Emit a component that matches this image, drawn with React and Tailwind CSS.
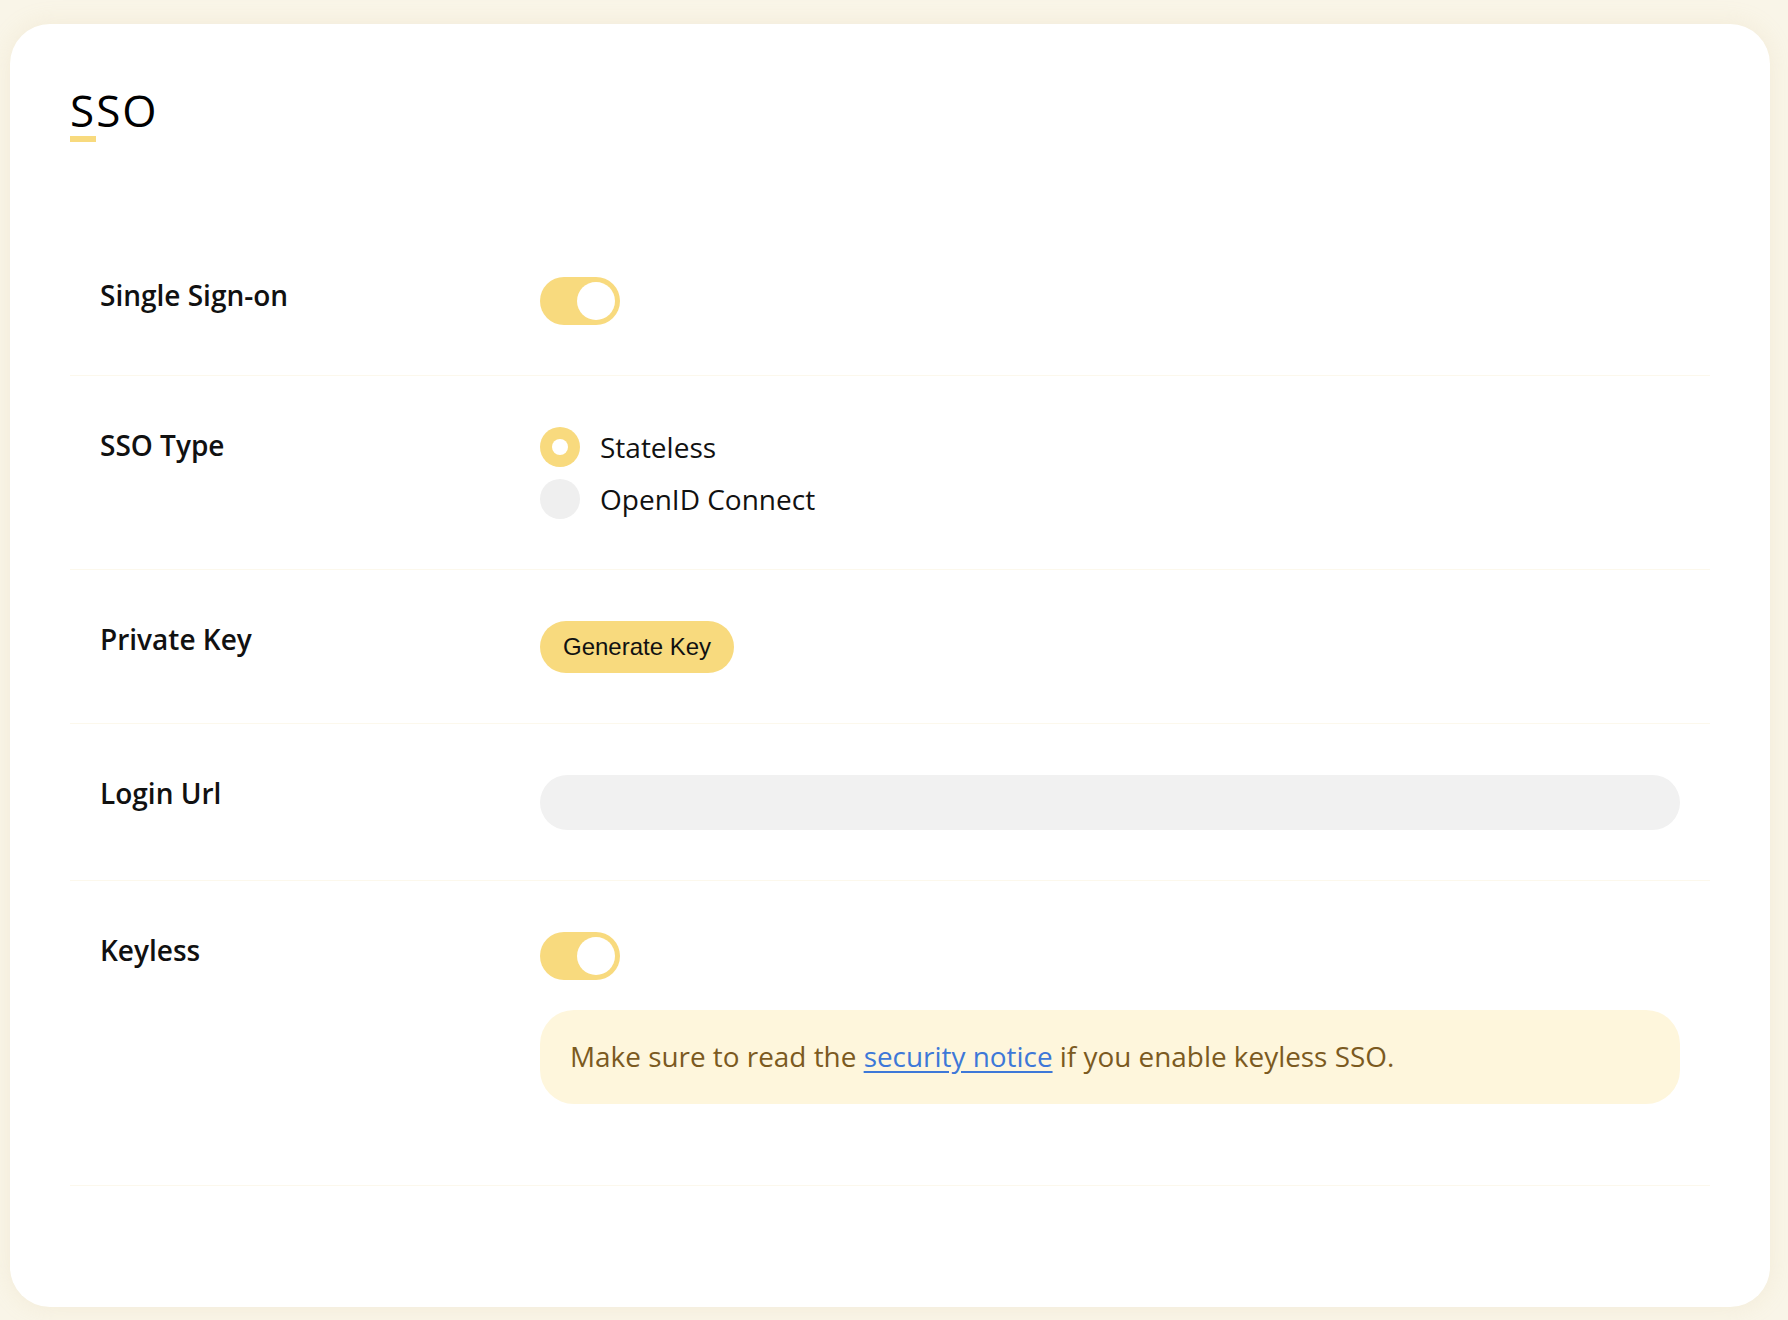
import { useState } from "react";

const Toggle = ({ on, onChange }) => (
  <button
    type="button"
    onClick={() => onChange(!on)}
    className={`flex h-[48px] w-[80px] shrink-0 items-center rounded-full p-[5px] ${
      on ? "justify-end bg-[#f8da7e]" : "justify-start bg-[#efefef]"
    }`}
  >
    <span className="block h-[38px] w-[38px] rounded-full bg-white" />
  </button>
);

const Radio = ({ checked, label, onClick }) => (
  <label onClick={onClick} className="flex cursor-pointer items-center gap-[20px]">
    <span
      className={`flex h-[40px] w-[40px] items-center justify-center rounded-full ${
        checked ? "bg-[#f8da7e]" : "bg-[#efefef]"
      }`}
    >
      {checked && <span className="block h-[16px] w-[16px] rounded-full bg-white" />}
    </span>
    <span className="text-[28px] leading-[40px] text-[#111]">{label}</span>
  </label>
);

const Row = ({ label, children, last = false }) => (
  <div
    className={`flex items-start border-b border-[#fcf8ec] px-[30px] pt-[51px] ${
      last ? "pb-[81px]" : "pb-[50px]"
    }`}
  >
    <div className="w-[440px] shrink-0 text-[28px] font-[650] leading-[36px] text-[#111]">
      {label}
    </div>
    <div className="flex min-w-0 flex-1 flex-col">{children}</div>
  </div>
);

export default function App() {
  const [sso, setSso] = useState(true);
  const [type, setType] = useState("stateless");
  const [keyless, setKeyless] = useState(true);

  return (
    <div
      className="min-h-screen bg-[#f9f5e8] pl-[10px] pt-[24px]"
      style={{ fontFamily: '"Open Sans", "Noto Sans", sans-serif' }}
    >
      <div className="h-[1283px] w-[1760px] rounded-[40px] bg-white px-[60px] pt-[64px] shadow-[0_0_24px_rgba(214,196,140,0.18)]">
        {/* Heading */}
        <h1 className="text-[44px] font-medium leading-[44px] tracking-[2px] text-black">SSO</h1>
        <div className="mt-[4px] h-[6px] w-[26px] bg-[#f8da7e]" />

        {/* Settings */}
        <div className="mt-[84px]">
          <Row label="Single Sign-on">
            <Toggle on={sso} onChange={setSso} />
          </Row>

          <Row label="SSO Type">
            <div className="flex flex-col gap-[12px]">
              <Radio
                checked={type === "stateless"}
                label="Stateless"
                onClick={() => setType("stateless")}
              />
              <Radio
                checked={type === "oidc"}
                label="OpenID Connect"
                onClick={() => setType("oidc")}
              />
            </div>
          </Row>

          <Row label="Private Key">
            <div>
              <button
                type="button"
                className="h-[52px] rounded-full bg-[#f8da7e] px-[23px] text-[24px] text-[#111]"
                style={{ fontFamily: '"Liberation Sans", Arial, sans-serif' }}
              >
                Generate Key
              </button>
            </div>
          </Row>

          <Row label="Login Url">
            <input
              type="text"
              className="h-[55px] w-full rounded-full bg-[#f1f1f1] px-[24px] text-[24px] outline-none"
            />
          </Row>

          <Row label="Keyless" last>
            <Toggle on={keyless} onChange={setKeyless} />
            <div className="mt-[30px] flex h-[94px] items-center rounded-[34px] bg-[#fef6dc] px-[30px] text-[27.9px] text-[#7b5a1f]">
              <p>
                Make sure to read the{" "}
                <a href="#" className="text-[#3d78d8] underline underline-offset-[4px]">
                  security notice
                </a>{" "}
                if you enable keyless SSO.
              </p>
            </div>
          </Row>
        </div>
      </div>
    </div>
  );
}
